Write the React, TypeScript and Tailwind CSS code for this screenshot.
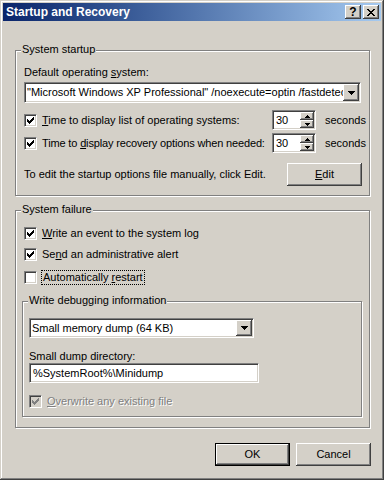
import React from 'react';

const raised =
  'bg-[#d4d0c8] shadow-[inset_-1px_-1px_0_#404040,inset_1px_1px_0_#fff,inset_-2px_-2px_0_#808080,inset_2px_2px_0_#d4d0c8]';
const sunken =
  'border border-t-[#808080] border-l-[#808080] border-r-white border-b-white shadow-[inset_1px_1px_0_#404040,inset_-1px_-1px_0_#d4d0c8]';

const checkPixels = [
  [6, 0], [5, 1], [6, 1], [0, 2], [4, 2], [5, 2], [6, 2],
  [0, 3], [1, 3], [3, 3], [4, 3], [5, 3],
  [0, 4], [1, 4], [2, 4], [3, 4], [4, 4],
  [1, 5], [2, 5], [3, 5], [2, 6],
];
const checkPath = checkPixels.map(([x, y]) => `M${x} ${y}h1v1h-1z`).join('');

const CheckBox = ({ checked, disabled }: { checked?: boolean; disabled?: boolean }) => (
  <div
    className={`w-[13px] h-[13px] shrink-0 flex items-center justify-center ${sunken} ${
      disabled ? 'bg-[#d4d0c8]' : 'bg-white'
    }`}
  >
    {checked && (
      <svg width="7" height="7" viewBox="0 0 7 7" shapeRendering="crispEdges">
        <path d={checkPath} fill={disabled ? '#808080' : '#000'} />
      </svg>
    )}
  </div>
);

const Arrow = ({ up, w = 7 }: { up?: boolean; w?: number }) => {
  const rows = Math.ceil(w / 2);
  let d = '';
  for (let i = 0; i < rows; i++) {
    const len = w - i * 2;
    const y = up ? rows - 1 - i : i;
    d += `M${i} ${y}h${len}v1h-${len}z`;
  }
  return (
    <svg width={w} height={rows} viewBox={`0 0 ${w} ${rows}`} shapeRendering="crispEdges">
      <path d={d} fill="#000" />
    </svg>
  );
};

const Combo = ({ text, className }: { text: string; className: string }) => (
  <div className={`flex items-stretch bg-white ${sunken} ${className}`}>
    <div className="flex-1 overflow-hidden whitespace-nowrap pl-[2px] leading-[17px] pt-[1px]">{text}</div>
    <div className={`w-[16px] my-[1px] mr-[1px] flex items-center justify-center ${raised}`}>
      <Arrow />
    </div>
  </div>
);

const Spinner = () => (
  <div className={`w-[44px] h-[20px] shrink-0 flex bg-white ${sunken}`}>
    <div className="flex-1 pl-[3px] leading-[16px] pt-[1px]">30</div>
    <div className="w-[15px] flex flex-col py-[1px] pr-[1px]">
      <div className={`flex-1 flex items-center justify-center ${raised}`}>
        <Arrow up w={5} />
      </div>
      <div className={`flex-1 flex items-center justify-center ${raised}`}>
        <Arrow w={5} />
      </div>
    </div>
  </div>
);

const Group = ({
  label,
  className,
  children,
}: {
  label: string;
  className: string;
  children: React.ReactNode;
}) => (
  <div className={`relative border border-[#808080] shadow-[1px_1px_0_#fff,inset_1px_1px_0_#fff] ${className}`}>
    <span className="absolute -top-[8px] left-[5px] px-[1px] bg-[#d4d0c8] leading-[13px]">{label}</span>
    {children}
  </div>
);

const Button = ({ children, isDefault }: { children: React.ReactNode; isDefault?: boolean }) => (
  <div className={`w-[75px] h-[23px] ${isDefault ? 'border border-black' : ''}`}>
    <div className={`w-full h-full flex items-center justify-center ${raised}`}>{children}</div>
  </div>
);

export default function App() {
  return (
    <div
      className="w-[384px] h-[480px] p-[3px] flex flex-col bg-[#d4d0c8] text-black text-[11px] shadow-[inset_-1px_-1px_0_#404040,inset_1px_1px_0_#d4d0c8,inset_-2px_-2px_0_#808080,inset_2px_2px_0_#fff]"
      style={{ fontFamily: '"Liberation Sans", Arial, sans-serif' }}
    >
      <div className="h-[18px] flex items-center pl-[3px] pr-[2px] bg-gradient-to-r from-[#0a246a] to-[#a6caf0]">
        <span className="text-white font-bold text-[12px] leading-[14px]">Startup and Recovery</span>
        <div className="ml-auto flex gap-[1px]">
          <div className={`w-[16px] h-[14px] flex items-center justify-center font-bold text-[12px] leading-[12px] ${raised}`}>
            ?
          </div>
          <div className={`w-[16px] h-[14px] flex items-center justify-center ml-[1px] ${raised}`}>
            <svg width="8" height="7" viewBox="0 0 8 7" shapeRendering="crispEdges">
              <path
                d="M0 0h2v1h-2zM6 0h2v1h-2zM1 1h2v1h-2zM5 1h2v1h-2zM2 2h4v1h-4zM3 3h2v1h-2zM2 4h4v1h-4zM1 5h2v1h-2zM5 5h2v1h-2zM0 6h2v1h-2zM6 6h2v1h-2z"
                fill="#000"
              />
            </svg>
          </div>
        </div>
      </div>

      <div className="flex flex-col px-[12px] pt-[29px]">
        <Group label="System startup" className="h-[146px] w-[355px] px-[8px] pt-[15px] flex flex-col">
          <div className="leading-[13px]">
            Default operating <span className="underline">s</span>ystem:
          </div>
          <Combo
            className="mt-[3px] h-[21px]"
            text={'"Microsoft Windows XP Professional" /noexecute=optin /fastdetect'}
          />
          <div className="mt-[7px] h-[20px] flex items-center">
            <div className="w-[248px] shrink-0 flex items-center gap-[5px]">
              <CheckBox checked />
              <span className="whitespace-nowrap">
                <span className="underline">T</span>ime to display list of operating systems:
              </span>
            </div>
            <Spinner />
            <span className="ml-[9px] whitespace-nowrap">seconds</span>
          </div>
          <div className="mt-[3px] h-[20px] flex items-center">
            <div className="w-[248px] shrink-0 flex items-center gap-[5px]">
              <CheckBox checked />
              <span className="whitespace-nowrap tracking-[-0.15px]">
                Time to <span className="underline">d</span>isplay recovery options when needed:
              </span>
            </div>
            <Spinner />
            <span className="ml-[9px] whitespace-nowrap">seconds</span>
          </div>
          <div className="mt-[10px] flex items-center justify-between">
            <span>To edit the startup options file manually, click Edit.</span>
            <div className={`w-[75px] h-[23px] -mr-[1px] flex items-center justify-center ${raised}`}>
              <span>
                <span className="underline">E</span>dit
              </span>
            </div>
          </div>
        </Group>

        <Group label="System failure" className="mt-[14px] h-[218px] w-[355px] pl-[6px] pt-[14px] flex flex-col">
          <div className="h-[17px] pl-[2px] flex items-center gap-[5px]">
            <CheckBox checked />
            <span>
              <span className="underline">W</span>rite an event to the system log
            </span>
          </div>
          <div className="mt-[4px] h-[17px] pl-[2px] flex items-center gap-[5px]">
            <CheckBox checked />
            <span>
              Se<span className="underline">n</span>d an administrative alert
            </span>
          </div>
          <div className="mt-[6px] h-[17px] pl-[2px] flex items-center gap-[4px]">
            <CheckBox />
            <span className="border border-dotted border-black px-[1px] leading-[13px]">
              Automatically <span className="underline">r</span>estart
            </span>
          </div>

          <Group label="Write debugging information" className="mt-[15px] h-[116px] w-[340px] pl-[6px] pt-[16px] flex flex-col">
            <Combo className="h-[20px] w-[225px]" text="Small memory dump (64 KB)" />
            <div className="mt-[12px] leading-[13px]">Small dump directory:</div>
            <div className={`h-[20px] w-[230px] bg-white pl-[3px] leading-[16px] pt-[1px] ${sunken}`}>
              %SystemRoot%\Minidump
            </div>
            <div className="mt-[10px] h-[17px] flex items-center gap-[5px]">
              <CheckBox checked disabled />
              <span className="text-[#808080] [text-shadow:1px_1px_0_#fff]">
                <span className="underline">O</span>verwrite any existing file
              </span>
            </div>
          </Group>
        </Group>

        <div className="mt-[15px] -mr-[2px] flex justify-end gap-[6px]">
          <Button isDefault>OK</Button>
          <Button>Cancel</Button>
        </div>
      </div>
    </div>
  );
}
